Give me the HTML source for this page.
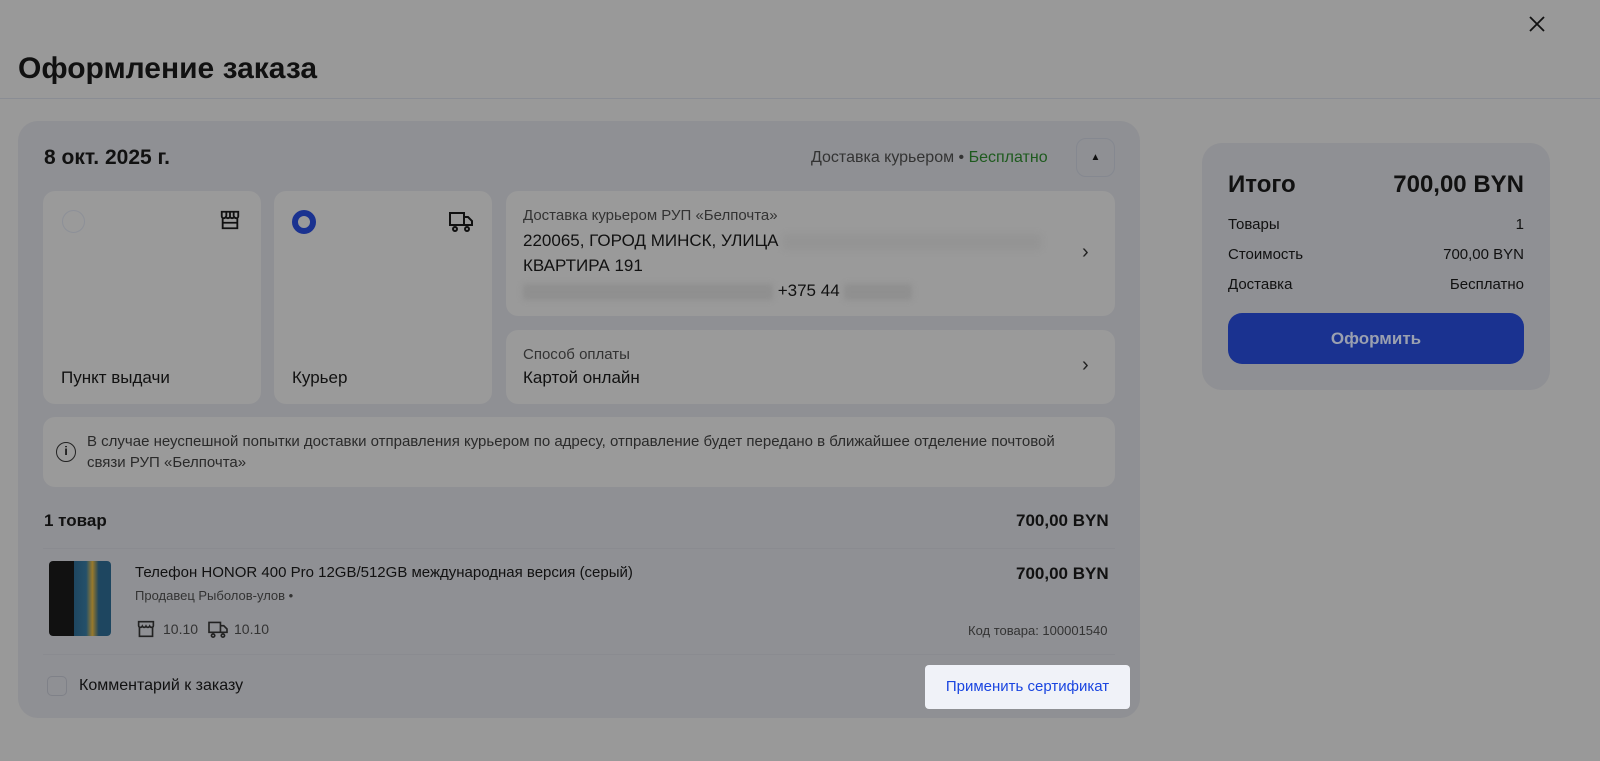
<!DOCTYPE html>
<html><head><meta charset="utf-8"><style>
*{box-sizing:border-box;margin:0;padding:0}
body{width:1600px;height:761px;background:#999999;font-family:"Liberation Sans",sans-serif;color:#111;position:relative;overflow:hidden}
.a{position:absolute}
.card{background:#9a9a9a;border-radius:12px;position:absolute}
.s{font-size:15px;color:#2a2a2a}
</style></head><body>
<svg class="a" style="left:1529px;top:16px" width="16" height="16" viewBox="0 0 16 16" stroke="#111" stroke-width="1.8"><path d="M1 1L15 15M15 1L1 15"/></svg>
<div class="a" style="left:18px;top:52px;font-size:30px;font-weight:bold">Оформление заказа</div>
<div class="a" style="left:0;top:98px;width:1600px;height:1px;background:#8a8d94"></div>

<div class="a" style="left:18px;top:121px;width:1122px;height:597px;background:#8f9094;border-radius:20px"></div>
<div class="a" style="left:44px;top:146px;font-size:21px;font-weight:bold">8 окт. 2025 г.</div>
<div class="a" style="left:811px;top:149px;font-size:16px;color:#333">Доставка курьером • <span style="color:#1e5a1e">Бесплатно</span></div>
<div class="a" style="left:1076px;top:138px;width:39px;height:39px;border:1px solid #858890;border-radius:10px;text-align:center;line-height:38px;font-size:10px">▲</div>

<div class="card" style="left:43px;top:191px;width:218px;height:213px">
 <div class="a" style="left:19px;top:19px;width:23px;height:23px;border:1px solid #8d9098;border-radius:50%"></div>
 <svg class="a" style="left:176px;top:18px" width="22" height="22" viewBox="0 0 24 24" fill="none" stroke="#111" stroke-width="2"><path d="M4 10v11h16V10M3 3h18v5c0 1.5-1.3 2-2.2 2S17 9.5 16.5 8.5C16 9.5 15 10 14.2 10S12.5 9.5 12 8.5C11.5 9.5 10.7 10 9.8 10S8 9.5 7.5 8.5C7 9.5 6 10 5.2 10S3 9.5 3 8z M8 3v5M12 3v5M16 3v5M4 15h16"/></svg>
 <div class="a" style="left:18px;top:177px;font-size:17px">Пункт выдачи</div>
</div>
<div class="card" style="left:274px;top:191px;width:218px;height:213px">
 <div class="a" style="left:18px;top:19px;width:24px;height:24px;border:6px solid #1a3290;border-radius:50%;background:#9a9a9a"></div>
 <svg class="a" style="left:174px;top:17px" width="26" height="24" viewBox="0 0 26 24" fill="none" stroke="#111" stroke-width="2"><path d="M2 5h14v12H2zM16 9h4l4 4v4h-8M7 19a2 2 0 1 0 0.01 0M19 19a2 2 0 1 0 0.01 0"/></svg>
 <div class="a" style="left:18px;top:177px;font-size:17px">Курьер</div>
</div>
<div class="card" style="left:506px;top:191px;width:609px;height:125px">
 <div class="a s" style="left:17px;top:16px;color:#333">Доставка курьером РУП «Белпочта»</div>
 <div class="a" style="left:17px;top:40px;font-size:17px">220065, ГОРОД МИНСК, УЛИЦА <span style="display:inline-block;width:258px;height:16px;background:#949494;filter:blur(3px);vertical-align:middle"></span></div>
 <div class="a" style="left:17px;top:65px;font-size:17px">КВАРТИРА 191</div>
 <div class="a" style="left:17px;top:90px;font-size:17px"><span style="display:inline-block;width:250px;height:16px;background:#8f8f8f;filter:blur(3px);vertical-align:middle"></span> +375 44 <span style="display:inline-block;width:68px;height:16px;background:#8f8f8f;filter:blur(3px);vertical-align:middle"></span></div>
 <div class="a" style="left:576px;top:50px;font-size:20px;color:#222">›</div>
</div>
<div class="card" style="left:506px;top:330px;width:609px;height:74px">
 <div class="a s" style="left:17px;top:16px;color:#333">Способ оплаты</div>
 <div class="a" style="left:17px;top:38px;font-size:17px">Картой онлайн</div>
 <div class="a" style="left:576px;top:24px;font-size:20px;color:#222">›</div>
</div>
<div class="card" style="left:43px;top:417px;width:1072px;height:70px">
 <div class="a" style="left:13px;top:25px;width:20px;height:20px;border:1.5px solid #222;border-radius:50%;font-size:12px;text-align:center;line-height:17px;font-weight:bold">i</div>
 <div class="a s" style="left:44px;top:14px;width:1000px;line-height:21px">В случае неуспешной попытки доставки отправления курьером по адресу, отправление будет передано в ближайшее отделение почтовой<br>связи РУП «Белпочта»</div>
</div>
<div class="a" style="left:44px;top:511px;font-size:17px;font-weight:bold">1 товар</div>
<div class="a" style="left:1016px;top:511px;font-size:17px;font-weight:bold">700,00 BYN</div>
<div class="a" style="left:43px;top:548px;width:1072px;height:1px;background:#8a8b90"></div>
<div class="a" style="left:49px;top:561px;width:62px;height:75px;border-radius:4px;background:linear-gradient(90deg,#111 0 40%,#1e4660 40%,#24506a 60%,#9a7a2a 70%,#1e4660 80%)"></div>
<div class="a" style="left:135px;top:564px;font-size:15px">Телефон HONOR 400 Pro 12GB/512GB международная версия (серый)</div>
<div class="a" style="left:135px;top:588px;font-size:13px;color:#333">Продавец Рыболов-улов •</div>
<svg class="a" style="left:136px;top:620px" width="20" height="18" viewBox="0 0 24 22" fill="none" stroke="#222" stroke-width="2"><path d="M4 8v12h16V8M3 2h18v5c0 1.5-1.3 2-2.2 2S17 8.5 16.5 7.5C16 8.5 15 9 14.2 9S12.5 8.5 12 7.5C11.5 8.5 10.7 9 9.8 9S8 8.5 7.5 7.5C7 8.5 6 9 5.2 9S3 8.5 3 7z"/></svg>
<div class="a" style="left:163px;top:621px;font-size:14px;color:#333">10.10</div>
<svg class="a" style="left:207px;top:620px" width="22" height="18" viewBox="0 0 26 22" fill="none" stroke="#222" stroke-width="2"><path d="M2 3h14v12H2zM16 7h4l4 4v4h-8M7 17a2 2 0 1 0 0.01 0M19 17a2 2 0 1 0 0.01 0"/></svg>
<div class="a" style="left:234px;top:621px;font-size:14px;color:#333">10.10</div>
<div class="a" style="left:1016px;top:564px;font-size:17px;font-weight:bold">700,00 BYN</div>
<div class="a" style="left:968px;top:623px;font-size:13px;color:#333">Код товара: 100001540</div>
<div class="a" style="left:43px;top:654px;width:1072px;height:1px;background:#8a8b90"></div>
<div class="a" style="left:47px;top:676px;width:20px;height:20px;border:1px solid #7f8188;border-radius:5px"></div>
<div class="a" style="left:79px;top:677px;font-size:16px">Комментарий к заказу</div>
<div class="a" style="left:925px;top:665px;width:205px;height:44px;background:#f0f2f8;border-radius:4px;color:#1a45e0;font-size:15px;text-align:center;line-height:44px">Применить сертификат</div>

<div class="a" style="left:1202px;top:143px;width:348px;height:247px;background:#8f9094;border-radius:20px"></div>
<div class="a" style="left:1228px;top:171px;font-size:24px;font-weight:bold">Итого</div>
<div class="a" style="left:1228px;top:171px;width:296px;text-align:right;font-size:24px;font-weight:bold">700,00 BYN</div>
<div class="a" style="left:1228px;top:216px;font-size:15px">Товары</div><div class="a" style="left:1228px;top:216px;width:296px;text-align:right;font-size:15px">1</div>
<div class="a" style="left:1228px;top:246px;font-size:15px">Стоимость</div><div class="a" style="left:1228px;top:246px;width:296px;text-align:right;font-size:15px">700,00 BYN</div>
<div class="a" style="left:1228px;top:276px;font-size:15px">Доставка</div><div class="a" style="left:1228px;top:276px;width:296px;text-align:right;font-size:15px">Бесплатно</div>
<div class="a" style="left:1228px;top:313px;width:296px;height:51px;background:#1a3290;border-radius:14px;color:#9aa0b0;font-size:17px;font-weight:bold;text-align:center;line-height:51px">Оформить</div>
</body></html>
